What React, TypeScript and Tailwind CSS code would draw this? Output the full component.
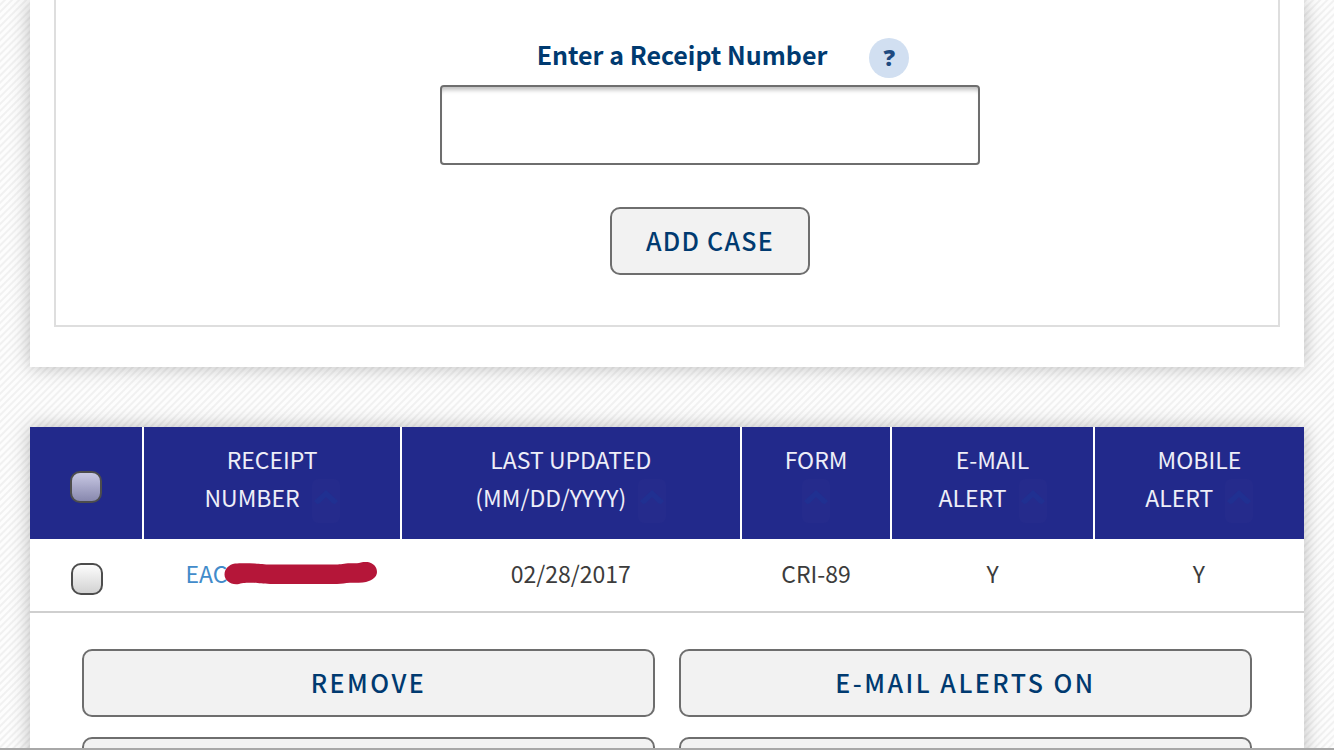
import { useState } from 'react'
import clsx from 'clsx'

interface CaseRow {
  receipt: string
  lastUpdated: string
  form: string
  emailAlert: string
  mobileAlert: string
}

const columns = [
  { first: 'RECEIPT', second: 'NUMBER', width: 'w-[20.2%]' },
  { first: 'LAST UPDATED', second: '(MM/DD/YYYY)', width: 'w-[26.7%]' },
  { first: 'FORM', second: '', width: 'w-[11.8%]' },
  { first: 'E-MAIL', second: 'ALERT', width: 'w-[15.9%]' },
  { first: 'MOBILE', second: 'ALERT', width: 'w-[16.5%]' },
]

const cases: CaseRow[] = [
  { receipt: 'EAC', lastUpdated: '02/28/2017', form: 'CRI-89', emailAlert: 'Y', mobileAlert: 'Y' },
]

const buttonClass =
  'h-[68px] rounded-[10px] border-2 border-[#6e6e6e] bg-[#f2f2f2] pb-[2px] text-[25px] leading-8 font-medium text-[#003a70]'

const checkboxClass =
  'block mx-auto size-8 appearance-none rounded-[10px] border-2 border-[#4d4d4d] bg-linear-to-b checked:from-[#8a8aa8]'

function SortArrow() {
  return (
    <svg width="24" height="16" viewBox="0 0 24 16" fill="currentColor" aria-hidden="true">
      <path d="M12 1 24 12l-3 3c-2 0-3-1-4-2l-5-5-5 5c-1 1-2 2-4 2l-3-3Z" />
    </svg>
  )
}

function Redaction() {
  return (
    <svg className="absolute top-1/2 left-[39px] -mt-[11px] h-6 w-[154px]" viewBox="0 0 154 24" aria-hidden="true">
      <path
        fill="#b51639"
        d="M11 1.500C16 1 24 1 31 1.500c5 .3 9 1 16 1h65c5 0 8-1 14-1.200 4 0 7 .2 11-.800 8-2.500 16 2 16 9.500 0 5-5 8.500-11 10-4 1-10 .6-16 .8-5 .2-8 1.200-13 1.200H46c-8 0-12-1.200-18-1.200-6 0-9 0-13 1.200C7 23.500.500 18.500.500 12.500.500 7 5 2.500 11 1.500Z"
      />
    </svg>
  )
}

export default function App() {
  const [receipt, setReceipt] = useState('')
  const [selected, setSelected] = useState<string[]>([])

  const toggle = (id: string) =>
    setSelected((s) => (s.includes(id) ? s.filter((x) => x !== id) : [...s, id]))

  return (
    <div className="h-screen overflow-hidden border-b-2 border-[#a8a8a8] bg-[repeating-linear-gradient(135deg,#fdfdfd_0px,#fdfdfd_2px,#f1f1f1_3px,#f1f1f1_4px,#fdfdfd_5px)] px-[30px] font-['Noto_Sans_CJK_JP','Open_Sans',sans-serif] text-[23px] text-[#3c3c3c]">
      {/* Add a case */}
      <section className="bg-white px-6 pb-10 shadow-[0_0_18px_rgba(0,0,0,0.26)]">
        <form
          onSubmit={(e) => e.preventDefault()}
          className="flex flex-col items-center border-2 border-t-0 border-[#dedede] pt-[34px] pb-[50px] pl-[86px]"
        >
          <div className="flex h-[51px] items-start gap-[42px] pl-[26px]">
            <label htmlFor="receipt" className="text-[25px] leading-10 font-bold text-[#003a70]">
              Enter a Receipt Number
            </label>
            <button
              type="button"
              aria-label="Help"
              className="mt-1 size-10 rounded-full bg-[#d1dff1] pb-[2px] font-['Open_Sans',sans-serif] text-[23px] leading-9 font-extrabold text-[#1e4a80]"
            >
              ?
            </button>
          </div>
          <input
            id="receipt"
            type="text"
            value={receipt}
            onChange={(e) => setReceipt(e.target.value)}
            className="h-20 w-[540px] rounded-[4px] border-2 border-[#6e6e6e] bg-white px-4 shadow-[inset_0_6px_4px_-3px_rgba(0,0,0,0.25)]"
          />
          <button type="submit" className={clsx(buttonClass, 'mt-[42px] w-[200px] tracking-wider')}>
            ADD CASE
          </button>
        </form>
      </section>

      {/* Case list */}
      <section className="mt-[60px] bg-white pb-10 shadow-[0_0_18px_rgba(0,0,0,0.26)]">
        <table className="w-full table-fixed border-collapse text-center">
          <thead className="bg-[#22298b] text-[#eeeef8]">
            <tr className="h-28">
              <th className="w-[8.9%] pt-2">
                <input
                  type="checkbox"
                  aria-label="Select all cases"
                  checked={selected.length === cases.length}
                  onChange={() => setSelected(selected.length ? [] : cases.map((c) => c.receipt))}
                  className={clsx(checkboxClass, 'from-[#c9c9e4] to-[#8888ae]')}
                />
              </th>
              {columns.map((col) => (
                <th
                  key={col.first}
                  className={clsx(col.width, 'border-l-2 border-white pb-[10px] leading-[38px] font-normal')}
                >
                  <div>{col.first}</div>
                  <div className="flex h-[38px] items-center justify-center gap-3">
                    {col.second}
                    <button
                      type="button"
                      aria-label={`Sort by ${col.first}`}
                      className="mt-2 flex h-11 w-7 items-center justify-center rounded-[6px] bg-[#252b8c] pb-2 text-[#203091]"
                    >
                      <SortArrow />
                    </button>
                  </div>
                </th>
              ))}
            </tr>
          </thead>
          <tbody>
            {cases.map((c) => (
              <tr key={c.receipt} className="h-[73px] border-b-2 border-[#cfcfcf] leading-[38px]">
                <td className="pt-2">
                  <input
                    type="checkbox"
                    aria-label={`Select case ${c.receipt}`}
                    checked={selected.includes(c.receipt)}
                    onChange={() => toggle(c.receipt)}
                    className={clsx(checkboxClass, 'from-[#fdfdfd] to-[#d2d2d2]')}
                  />
                </td>
                <td className="pb-1 pl-[42px] text-left">
                  <span className="relative">
                    <a href="#case" className="text-[#428bca]">{c.receipt}</a>
                    <Redaction />
                  </span>
                </td>
                <td className="pb-1">{c.lastUpdated}</td>
                <td className="pb-1">{c.form}</td>
                <td className="pb-1">{c.emailAlert}</td>
                <td className="pb-1">{c.mobileAlert}</td>
              </tr>
            ))}
          </tbody>
        </table>

        {/* Bulk actions */}
        <div className="grid grid-cols-2 gap-x-6 gap-y-5 px-[52px] pt-9">
          <button type="button" className={clsx(buttonClass, 'tracking-widest')}>REMOVE</button>
          <button type="button" className={clsx(buttonClass, 'tracking-widest')}>E-MAIL ALERTS ON</button>
          <button type="button" aria-label="E-mail alerts off" className={buttonClass} />
          <button type="button" aria-label="Mobile alerts on" className={buttonClass} />
        </div>
      </section>
    </div>
  )
}
